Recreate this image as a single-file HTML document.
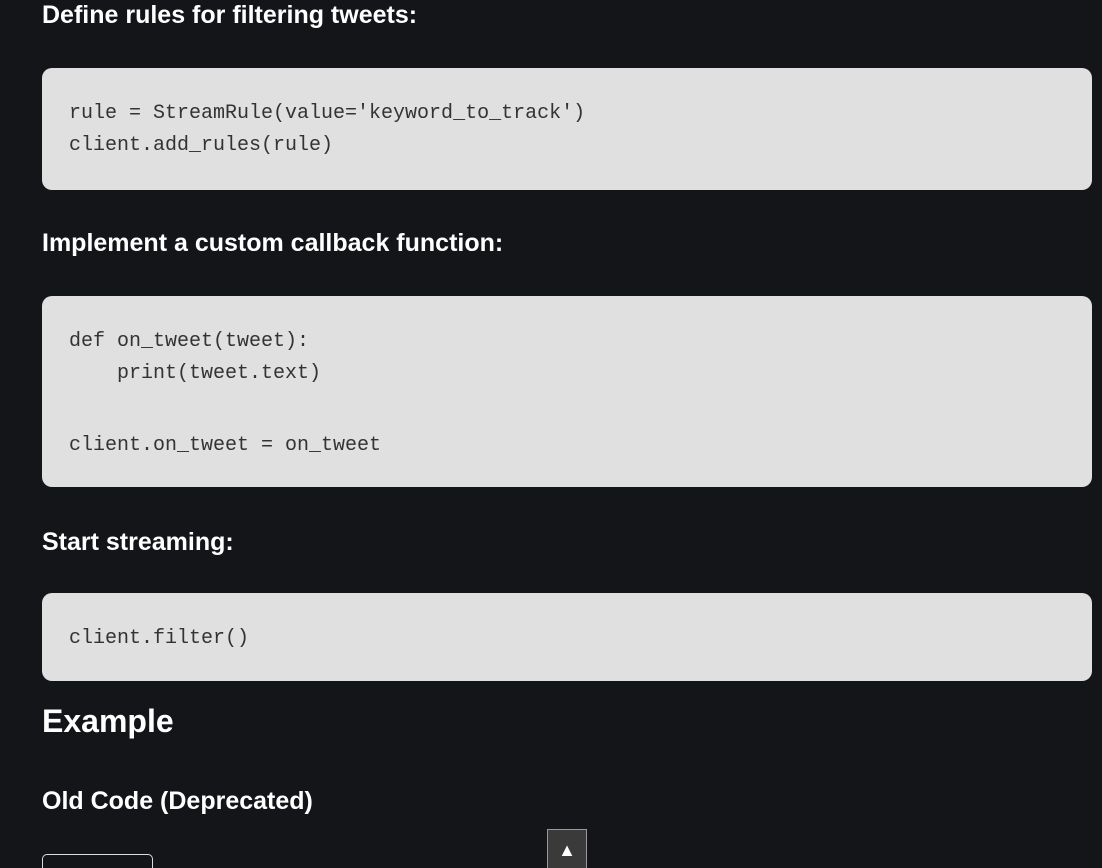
<!DOCTYPE html>
<html><head><style>
html,body{margin:0;width:1102px;height:868px;overflow:hidden}
body{background:#141519;position:relative;font-family:"Liberation Sans",sans-serif;color:#fff}
.h{position:absolute;left:42px;font-weight:bold;font-size:25px;line-height:30px;white-space:nowrap}
.box{position:absolute;left:42px;width:1050px;background:#e0e0e0;border-radius:10px}
.c{position:absolute;left:69px;font-family:"Liberation Mono",monospace;font-size:20px;line-height:32px;color:#333;white-space:pre}
</style></head><body>
<div class="h" style="top:0">Define rules for filtering tweets:</div>
<div class="box" style="top:68px;height:122px"></div>
<div class="c" style="top:98px">rule = StreamRule(value='keyword_to_track')</div>
<div class="c" style="top:130px">client.add_rules(rule)</div>
<div class="h" style="top:228px">Implement a custom callback function:</div>
<div class="box" style="top:296px;height:191px"></div>
<div class="c" style="top:326px">def on_tweet(tweet):</div>
<div class="c" style="top:358px">    print(tweet.text)</div>
<div class="c" style="top:430px">client.on_tweet = on_tweet</div>
<div class="h" style="top:527px">Start streaming:</div>
<div class="box" style="top:593px;height:88px"></div>
<div class="c" style="top:623px">client.filter()</div>
<div class="h" style="top:702px;font-size:32px;line-height:38px">Example</div>
<div class="h" style="top:786px">Old Code (Deprecated)</div>
<div style="position:absolute;left:42px;top:854px;width:109px;height:30px;border:1px solid #ddd;border-radius:5px"></div>
<div style="position:absolute;left:547px;top:829px;width:38px;height:40px;background:#3a3a3a;border:1px solid #999;color:#fff;font-size:18px;text-align:center;line-height:40px">▲</div>
</body></html>
